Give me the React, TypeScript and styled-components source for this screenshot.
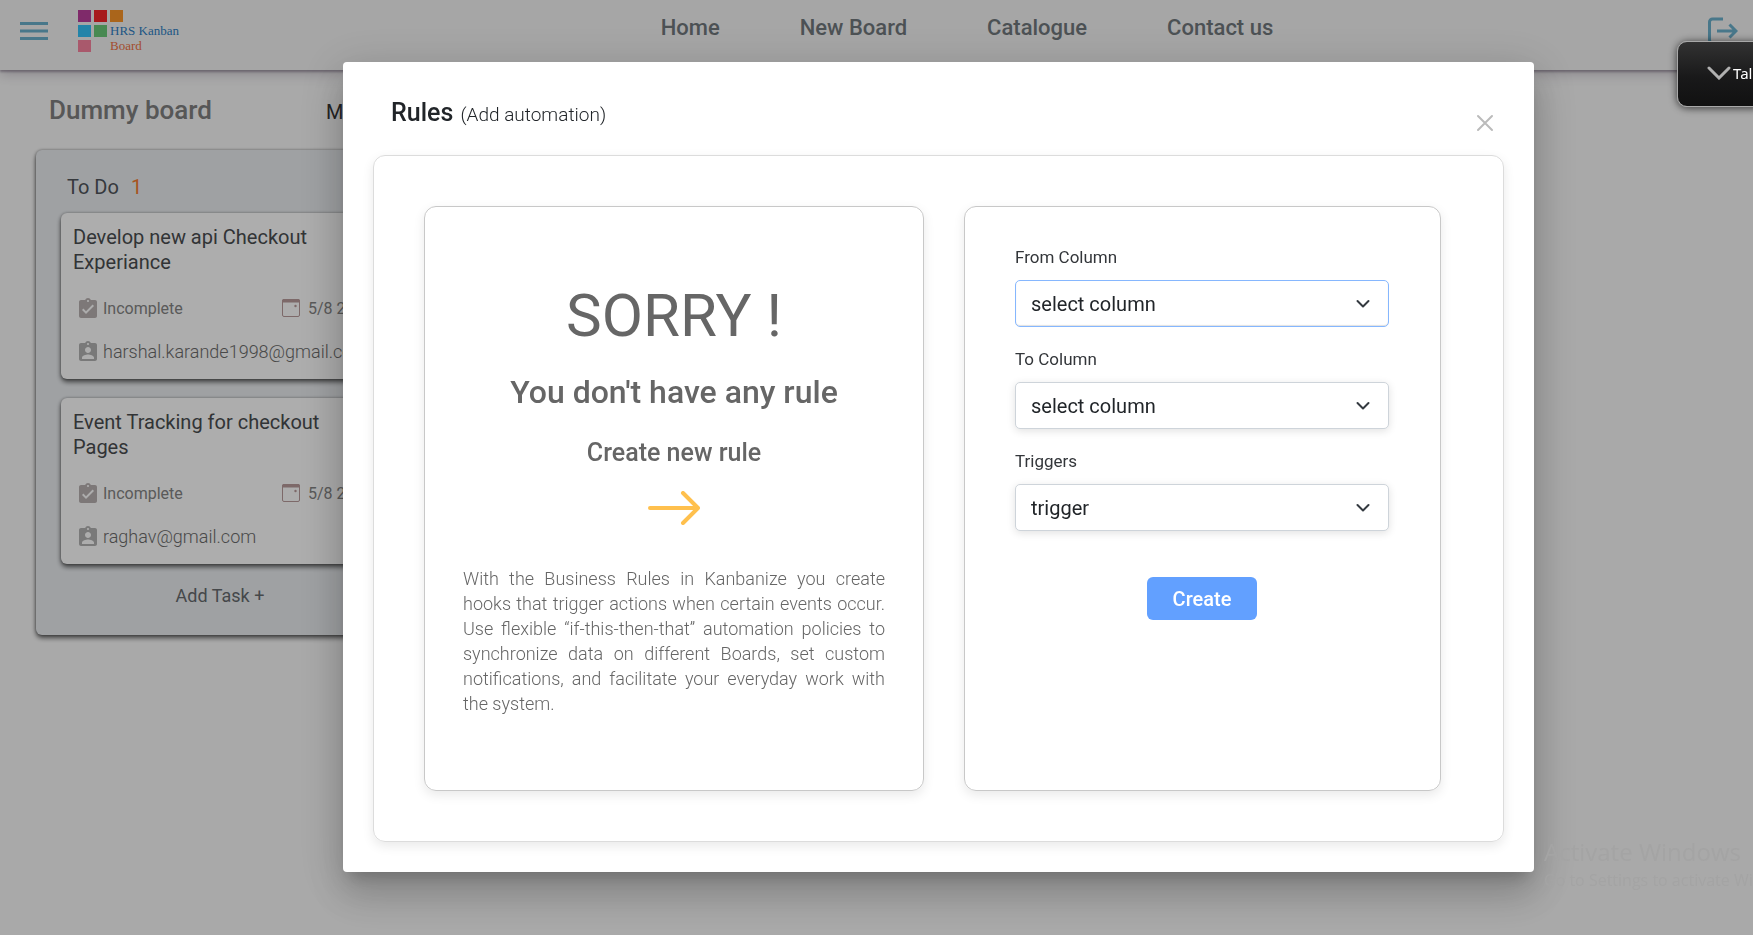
import React from "react";
import styled, { createGlobalStyle } from "styled-components";

const GlobalStyle = createGlobalStyle`
  *, *::before, *::after { box-sizing: border-box; }
  body {
    margin: 0;
    background: #fafafa;
    color: #212529;
    font-family: Roboto, "Liberation Sans", sans-serif;
    font-size: 18px;
    overflow: hidden;
  }
  h1, h2, h3, p, ul { margin: 0; padding: 0; }
  button, select { font: inherit; }
  svg { display: block; flex: none; }
`;

const Page = styled.div`
  min-height: 100vh;
`;

/* ---------- top bar ---------- */

const TopBar = styled.header`
  display: flex;
  height: 70px;
  padding: 0 15px 0 20px;
  background: #f5f5f5;
  box-shadow: 0 2px 2px rgba(60, 40, 70, 0.35), 0 4px 12px rgba(60, 40, 70, 0.25);
`;

const BarStart = styled.div`
  display: flex;
  flex: 641 1 0;
  gap: 30px;
`;

const BarEnd = styled.div`
  display: flex;
  flex: 465 1 0;
  justify-content: flex-end;
  padding-top: 17px;
`;

const IconButton = styled.button`
  display: flex;
  align-self: flex-start;
  padding: 0;
  border: 0;
  background: none;
  color: #6ab0cc;
  cursor: pointer;
`;

const MenuButton = styled(IconButton)`
  padding-top: 22px;
`;

const Brand = styled.a`
  display: grid;
  grid-template-columns: repeat(3, 13px);
  grid-template-rows: repeat(3, 12px);
  gap: 3px;
  padding-top: 10px;
  text-decoration: none;
  font-family: "Liberation Serif", serif;
  font-size: 13px;
  line-height: 12px;
  white-space: nowrap;
`;

const Tile = styled.span<{ $color: string; $area: string }>`
  grid-area: ${(p) => p.$area};
  background: ${(p) => p.$color};
`;

const BrandWord = styled.span<{ $color: string; $area: string }>`
  grid-area: ${(p) => p.$area};
  color: ${(p) => p.$color};
`;

const Nav = styled.nav`
  display: flex;
  gap: 80px;
  padding-top: 15px;
`;

const NavLink = styled.a`
  color: #71787d;
  font-size: 22px;
  font-weight: 500;
  line-height: 26px;
  text-decoration: none;
  white-space: nowrap;
`;

/* ---------- board ---------- */

const Board = styled.main`
  padding: 25px 36px 0;
`;

const BoardHead = styled.div`
  display: flex;
  align-items: baseline;
  width: 368px;
  padding: 0 0 0 13px;
  margin-bottom: 24px;
`;

const BoardTitle = styled.h1`
  width: 277px;
  color: #808080;
  font-size: 26px;
  font-weight: 500;
  line-height: 31px;
`;

const BoardMeta = styled.span`
  color: #333;
  font-size: 20px;
`;

const Column = styled.section`
  width: 368px;
  padding: 25px 25px 27px;
  border-radius: 6px;
  background: #ebeef1;
  box-shadow: 0 3px 5px rgba(0, 0, 0, 0.6), 0 0 3px rgba(0, 0, 0, 0.35);
`;

const ColumnTitle = styled.h2`
  display: flex;
  gap: 12px;
  padding-left: 6px;
  margin-bottom: 14px;
  color: #50545a;
  font-size: 20px;
  font-weight: 400;
  line-height: 24px;
`;

const Count = styled.span`
  color: #f57c30;
`;

const Card = styled.article`
  padding: 12px 12px 15px;
  margin-bottom: 19px;
  border-radius: 6px;
  background: #fff;
  box-shadow: 0 3px 5px rgba(0, 0, 0, 0.6), 0 0 3px rgba(0, 0, 0, 0.3);
`;

const CardTitle = styled.h3`
  max-width: 260px;
  color: #4a4d50;
  font-size: 20px;
  font-weight: 400;
  line-height: 25px;
`;

const CardRow = styled.div`
  display: flex;
  align-items: center;
  gap: 6px;
  height: 26px;
  margin-top: 20px;
  padding-left: 6px;
  color: #858585;
  white-space: nowrap;
  & + & { margin-top: 17px; }
`;

const Status = styled.span`
  width: 173px;
  font-size: 16px;
`;

const Due = styled.span`
  padding-left: 2px;
  font-size: 16px;
`;

const Email = styled.span`
  color: #6c6c6c;
  font-size: 18px;
  font-weight: 300;
`;

const AddTask = styled.button`
  display: block;
  width: 100%;
  padding: 0;
  border: 0;
  background: none;
  color: #666a6e;
  line-height: 25px;
  cursor: pointer;
`;

/* ---------- dialog ---------- */

const Backdrop = styled.div`
  position: fixed;
  inset: 0;
  display: flex;
  padding: 62px 219px 63px 343px;
  background: rgba(0, 0, 0, 0.32);
`;

const Dialog = styled.div`
  display: flex;
  flex: 1;
  flex-direction: column;
  border-radius: 4px;
  background: #fff;
  box-shadow: 0 11px 15px -7px rgba(0, 0, 0, 0.2), 0 24px 38px 3px rgba(0, 0, 0, 0.14),
    0 9px 46px 8px rgba(0, 0, 0, 0.12);
`;

const DialogHead = styled.div`
  display: flex;
  justify-content: space-between;
  align-items: flex-start;
  height: 93px;
  padding: 37px 40px 0 48px;
`;

const DialogTitle = styled.h2`
  font-size: 25px;
  font-weight: 500;
  line-height: 28px;
`;

const Subtitle = styled.small`
  margin-left: 1px;
  font-size: 19px;
  font-weight: 300;
`;

const CloseButton = styled(IconButton)`
  margin-top: 15px;
  color: #bbb;
`;

const Panel = styled.div`
  display: grid;
  flex: 1;
  grid-template-columns: minmax(0, 500fr) minmax(0, 477fr);
  gap: 40px;
  margin: 0 30px 30px;
  padding: 50px 62px 50px 50px;
  border: 1px solid #dcdcdc;
  border-radius: 12px;
  box-shadow: 0 4px 12px rgba(0, 0, 0, 0.09);
`;

const PanelCard = styled.section`
  border: 1px solid #c8c8c8;
  border-radius: 12px;
  box-shadow: 0 4px 12px rgba(0, 0, 0, 0.09);
`;

const EmptyState = styled(PanelCard)`
  display: flex;
  flex-direction: column;
  align-items: center;
  padding: 74px 38px 0;
  color: #666;
`;

const Sorry = styled.p`
  margin-bottom: 22px;
  font-size: 60px;
  line-height: 70px;
`;

const NoRule = styled.h3`
  margin-bottom: 27px;
  font-size: 32px;
  font-weight: 500;
  line-height: 38px;
`;

const CreateHint = styled.p`
  margin-bottom: 24px;
  font-size: 25px;
  font-weight: 500;
  line-height: 29px;
`;

const Explanation = styled.p`
  margin-top: 41px;
  font-size: 18px;
  font-weight: 300;
  line-height: 25px;
  text-align: justify;
`;

const RuleForm = styled.form`
  display: flex;
  flex-direction: column;
  padding: 40px 51px 40px 50px;
`;

const Label = styled.label`
  margin-bottom: 13px;
  color: #33363a;
  font-size: 17px;
  line-height: 20px;
`;

const SelectBox = styled.div`
  position: relative;
  display: flex;
  margin-bottom: 22px;
`;

const Select = styled.select<{ $active?: boolean }>`
  width: 100%;
  height: 47px;
  padding: 0 48px 0 15px;
  border: 1px solid ${(p) => (p.$active ? "#86b7fe" : "#ced4da")};
  border-radius: 5px;
  outline: 0;
  background: #fff;
  color: #212529;
  font-size: 20px;
  appearance: none;
  box-shadow: ${(p) => (p.$active ? "inset 0 -1px 1px rgba(0, 0, 0, 0.12)" : "0 2px 8px rgba(0, 0, 0, 0.12)")};
`;

const SelectArrow = styled.svg`
  position: absolute;
  top: 16px;
  right: 18px;
  pointer-events: none;
`;

const CreateButton = styled.button`
  align-self: center;
  width: 110px;
  height: 43px;
  margin-top: 24px;
  padding: 0;
  border: 0;
  border-radius: 6px;
  background: #62a0ff;
  color: #fff;
  font-size: 20px;
  font-weight: 500;
  cursor: pointer;
`;

/* ---------- overlays ---------- */

const TalkTab = styled.button`
  position: fixed;
  top: 41px;
  right: -14px;
  display: flex;
  align-items: center;
  gap: 2px;
  width: 90px;
  height: 66px;
  padding: 0 0 2px 29px;
  border: 1px solid #a8a8a8;
  border-radius: 10px;
  background: linear-gradient(#323232, #19191a 55%, #111);
  box-shadow: 0 1px 8px rgba(0, 0, 0, 0.7);
  color: #fff;
  font-family: "Noto Sans", "Open Sans", sans-serif;
  font-size: 15px;
`;

const Watermark = styled.aside`
  position: fixed;
  right: -61px;
  bottom: 43px;
  width: 270px;
  color: #a4a4a4;
  font-family: "Open Sans", sans-serif;
  font-size: 16px;
  line-height: 24px;
  white-space: nowrap;
  pointer-events: none;
`;

const WatermarkTitle = styled.p`
  font-size: 24px;
  line-height: 32px;
`;

const tiles = [
  { color: "#bb3e9d", area: "1 / 1" },
  { color: "#f7252b", area: "1 / 2" },
  { color: "#fb9528", area: "1 / 3" },
  { color: "#33c3fa", area: "2 / 1" },
  { color: "#6bcb79", area: "2 / 2" },
  { color: "#f983a0", area: "3 / 1" },
];

const links = ["Home", "New Board", "Catalogue", "Contact us"];

const tasks = [
  { title: "Develop new api Checkout Experiance", email: "harshal.karande1998@gmail.com" },
  { title: "Event Tracking for checkout Pages", email: "raghav@gmail.com" },
];

const fields = [
  { id: "from", label: "From Column", value: "select column", active: true },
  { id: "to", label: "To Column", value: "select column", active: false },
  { id: "trigger", label: "Triggers", value: "trigger", active: false },
];

const StatusIcon = () => (
  <svg width="18" height="20" viewBox="3 1 18 20" fill="#b9b1b1">
    <path d="M19 3h-4.18C14.4 1.84 13.3 1 12 1s-2.4.84-2.82 2H5c-1.1 0-2 .9-2 2v14c0 1.1.9 2 2 2h14c1.1 0 2-.9 2-2V5c0-1.1-.9-2-2-2zm-7 0c.55 0 1 .45 1 1s-.45 1-1 1-1-.45-1-1 .45-1 1-1zm-2 14l-4-4 1.41-1.41L10 14.17l6.59-6.59L18 9l-8 8z" />
  </svg>
);

const PersonIcon = () => (
  <svg width="18" height="20" viewBox="3 1 18 20" fill="#b3b3b3">
    <path d="M19 3h-4.18C14.4 1.84 13.3 1 12 1s-2.4.84-2.82 2H5c-1.1 0-2 .9-2 2v14c0 1.1.9 2 2 2h14c1.1 0 2-.9 2-2V5c0-1.1-.9-2-2-2zm-7 0c.55 0 1 .45 1 1s-.45 1-1 1-1-.45-1-1 .45-1 1-1zm0 4c1.66 0 3 1.34 3 3s-1.34 3-3 3-3-1.34-3-3 1.34-3 3-3zm6 12H6v-1.4c0-2 4-3.1 6-3.1s6 1.1 6 3.1V19z" />
  </svg>
);

const CalendarIcon = () => (
  <svg width="18" height="18" viewBox="0 0 18 18">
    <rect x="0.5" y="0.5" width="17" height="17" rx="1.5" fill="none" stroke="#b89b9b" />
    <path d="M0 3.5V2a2 2 0 0 1 2-2h14a2 2 0 0 1 2 2v1.5z" fill="#b89b9b" />
    <circle cx="13.5" cy="7" r="1.2" fill="#b89b9b" />
  </svg>
);

export default function App() {
  return (
    <>
      <GlobalStyle />
      <Page>
        <TopBar>
          <BarStart>
            <MenuButton aria-label="Menu">
              <svg width="28" height="18" viewBox="0 0 28 18" fill="currentColor">
                <path d="M0 0h28v3H0zM0 7.5h28v3H0zM0 15h28v3H0z" />
              </svg>
            </MenuButton>
            <Brand href="#" aria-label="HRS Kanban Board">
              {tiles.map((t) => (
                <Tile key={t.area} $color={t.color} $area={t.area} />
              ))}
              <BrandWord $color="#2e7fc4" $area="2 / 3">HRS Kanban</BrandWord>
              <BrandWord $color="#f07244" $area="3 / 3">Board</BrandWord>
            </Brand>
          </BarStart>
          <Nav>
            {links.map((l) => (
              <NavLink key={l} href="#">{l}</NavLink>
            ))}
          </Nav>
          <BarEnd>
            <IconButton aria-label="Log out">
              <svg width="30" height="28" viewBox="0 0 30 28" fill="none" stroke="currentColor" strokeWidth="3">
                <path d="M15 2H4.5a3 3 0 0 0-3 3v18a3 3 0 0 0 3 3H15" />
                <path d="M9 14h19M21.5 7.5L28 14l-6.5 6.5" />
              </svg>
            </IconButton>
          </BarEnd>
        </TopBar>

        <Board>
          <BoardHead>
            <BoardTitle>Dummy board</BoardTitle>
            <BoardMeta>M</BoardMeta>
          </BoardHead>
          <Column>
            <ColumnTitle>
              <span>To Do</span>
              <Count>1</Count>
            </ColumnTitle>
            {tasks.map((t) => (
              <Card key={t.email}>
                <CardTitle>{t.title}</CardTitle>
                <CardRow>
                  <StatusIcon />
                  <Status>Incomplete</Status>
                  <CalendarIcon />
                  <Due>5/8 2</Due>
                </CardRow>
                <CardRow>
                  <PersonIcon />
                  <Email>{t.email}</Email>
                </CardRow>
              </Card>
            ))}
            <AddTask>Add Task +</AddTask>
          </Column>
        </Board>
      </Page>

      <Backdrop>
        <Dialog role="dialog" aria-labelledby="rules-title">
          <DialogHead>
            <DialogTitle id="rules-title">
              Rules <Subtitle>(Add automation)</Subtitle>
            </DialogTitle>
            <CloseButton aria-label="Close">
              <svg width="18" height="18" viewBox="0 0 18 18" stroke="currentColor" strokeWidth="2" strokeLinecap="round">
                <path d="M2 2l14 14M16 2L2 16" />
              </svg>
            </CloseButton>
          </DialogHead>
          <Panel>
            <EmptyState>
              <Sorry>SORRY !</Sorry>
              <NoRule>You don't have any rule</NoRule>
              <CreateHint>Create new rule</CreateHint>
              <svg width="52" height="34" viewBox="0 0 52 34" fill="none" stroke="#ffc04d" strokeWidth="4" strokeLinecap="round" strokeLinejoin="round">
                <path d="M2 17h47M35 2l15 15-15 15" />
              </svg>
              <Explanation>
                With the Business Rules in Kanbanize you create hooks that trigger actions when certain events
                occur. Use flexible “if-this-then-that” automation policies to synchronize data on different
                Boards, set custom notifications, and facilitate your everyday work with the system.
              </Explanation>
            </EmptyState>
            <PanelCard>
              <RuleForm>
                {fields.map((f) => (
                  <React.Fragment key={f.id}>
                    <Label htmlFor={f.id}>{f.label}</Label>
                    <SelectBox>
                      <Select id={f.id} $active={f.active}>
                        <option>{f.value}</option>
                      </Select>
                      <SelectArrow width="16" height="16" viewBox="0 0 16 16" fill="none" stroke="#343a40" strokeWidth="2" strokeLinecap="round" strokeLinejoin="round">
                        <path d="M2.5 5l5.500 5.500 5.500-5.500" />
                      </SelectArrow>
                    </SelectBox>
                  </React.Fragment>
                ))}
                <CreateButton type="button">Create</CreateButton>
              </RuleForm>
            </PanelCard>
          </Panel>
        </Dialog>
      </Backdrop>

      <Watermark>
        <WatermarkTitle>Activate Windows</WatermarkTitle>
        <p>Go to Settings to activate Windows.</p>
      </Watermark>
      <TalkTab>
        <svg width="24" height="14" viewBox="0 0 24 14" fill="none" stroke="#b0b0b0" strokeWidth="3" strokeLinecap="round">
          <path d="M2 2l10 10L22 2" />
        </svg>
        Tal
      </TalkTab>
    </>
  );
}
